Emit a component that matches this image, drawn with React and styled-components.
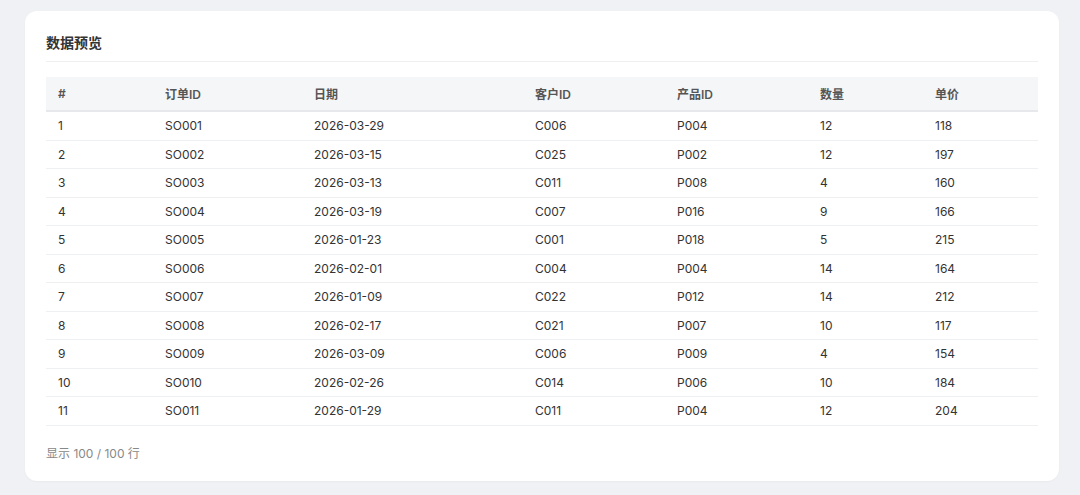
import React from 'react';
import styled, { createGlobalStyle } from 'styled-components';

const Global = createGlobalStyle`
  html, body { margin: 0; background: #f0f1f4; }
  body { font-family: "Inter", "Noto Sans CJK SC", sans-serif; color: #333; }
`;

const Page = styled.div`
  padding: 11px 21px 16px 25px;
`;
const Card = styled.section`
  background: #fff;
  border-radius: 12px;
  padding: 21px 21px 20px 21px;
  box-shadow: 0 1px 2px rgba(0,0,0,0.03);
`;
const Title = styled.h2`
  margin: 0;
  font-size: 14px;
  font-weight: 700;
  color: #333;
  line-height: 22px;
  padding-bottom: 7px;
  border-bottom: 1px solid #eef0f2;
`;
const Scroll = styled.div`
  margin-top: 15px;
  height: 350px;
  overflow-y: auto;
  scrollbar-width: none;
  &::-webkit-scrollbar { display: none; }
`;
const Table = styled.table`
  width: 100%;
  border-collapse: collapse;
  table-layout: fixed;
  font-size: 12px;
`;
const Th = styled.th`
  position: sticky;
  top: 0;
  background: #f5f6f8;
  text-align: left;
  font-weight: 600;
  color: #555;
  height: 33px;
  padding: 0 12px;
  border-bottom: 2px solid #e6e8eb;
`;
const Td = styled.td`
  height: 27.5px;
  padding: 0 12px;
  color: #333;
  border-bottom: 1px solid #eef0f2;
`;
const Footer = styled.div`
  margin-top: 17px;
  font-size: 12px;
  color: #888;
`;

const cols = [
  ['#', 107], ['订单ID', 149], ['日期', 221], ['客户ID', 142], ['产品ID', 143], ['数量', 115], ['单价', null],
];

const seed = [
  ['2026-03-29','C006','P004',12,118],
  ['2026-03-15','C025','P002',12,197],
  ['2026-03-13','C011','P008',4,160],
  ['2026-03-19','C007','P016',9,166],
  ['2026-01-23','C001','P018',5,215],
  ['2026-02-01','C004','P004',14,164],
  ['2026-01-09','C022','P012',14,212],
  ['2026-02-17','C021','P007',10,117],
  ['2026-03-09','C006','P009',4,154],
  ['2026-02-26','C014','P006',10,184],
  ['2026-01-29','C011','P004',12,204],
];
const pad = (n, w) => String(n).padStart(w, '0');
const rows = Array.from({ length: 100 }, (_, i) => {
  const s = seed[i] || [
    `2026-0${(i % 3) + 1}-${pad((i * 7) % 28 + 1, 2)}`,
    `C${pad((i * 13) % 30 + 1, 3)}`,
    `P${pad((i * 11) % 20 + 1, 3)}`,
    (i * 5) % 14 + 1,
    100 + (i * 37) % 120,
  ];
  return [i + 1, `SO${pad(i + 1, 3)}`, ...s];
});

export default function App() {
  return (
    <Page>
      <Global />
      <Card>
        <Title>数据预览</Title>
        <Scroll>
          <Table>
            <colgroup>
              {cols.map(([n, w]) => <col key={n} style={w ? { width: w } : undefined} />)}
            </colgroup>
            <thead>
              <tr>{cols.map(([n]) => <Th key={n}>{n}</Th>)}</tr>
            </thead>
            <tbody>
              {rows.map(r => (
                <tr key={r[0]}>{r.map((c, j) => <Td key={j}>{c}</Td>)}</tr>
              ))}
            </tbody>
          </Table>
        </Scroll>
        <Footer>显示 100 / 100 行</Footer>
      </Card>
    </Page>
  );
}
